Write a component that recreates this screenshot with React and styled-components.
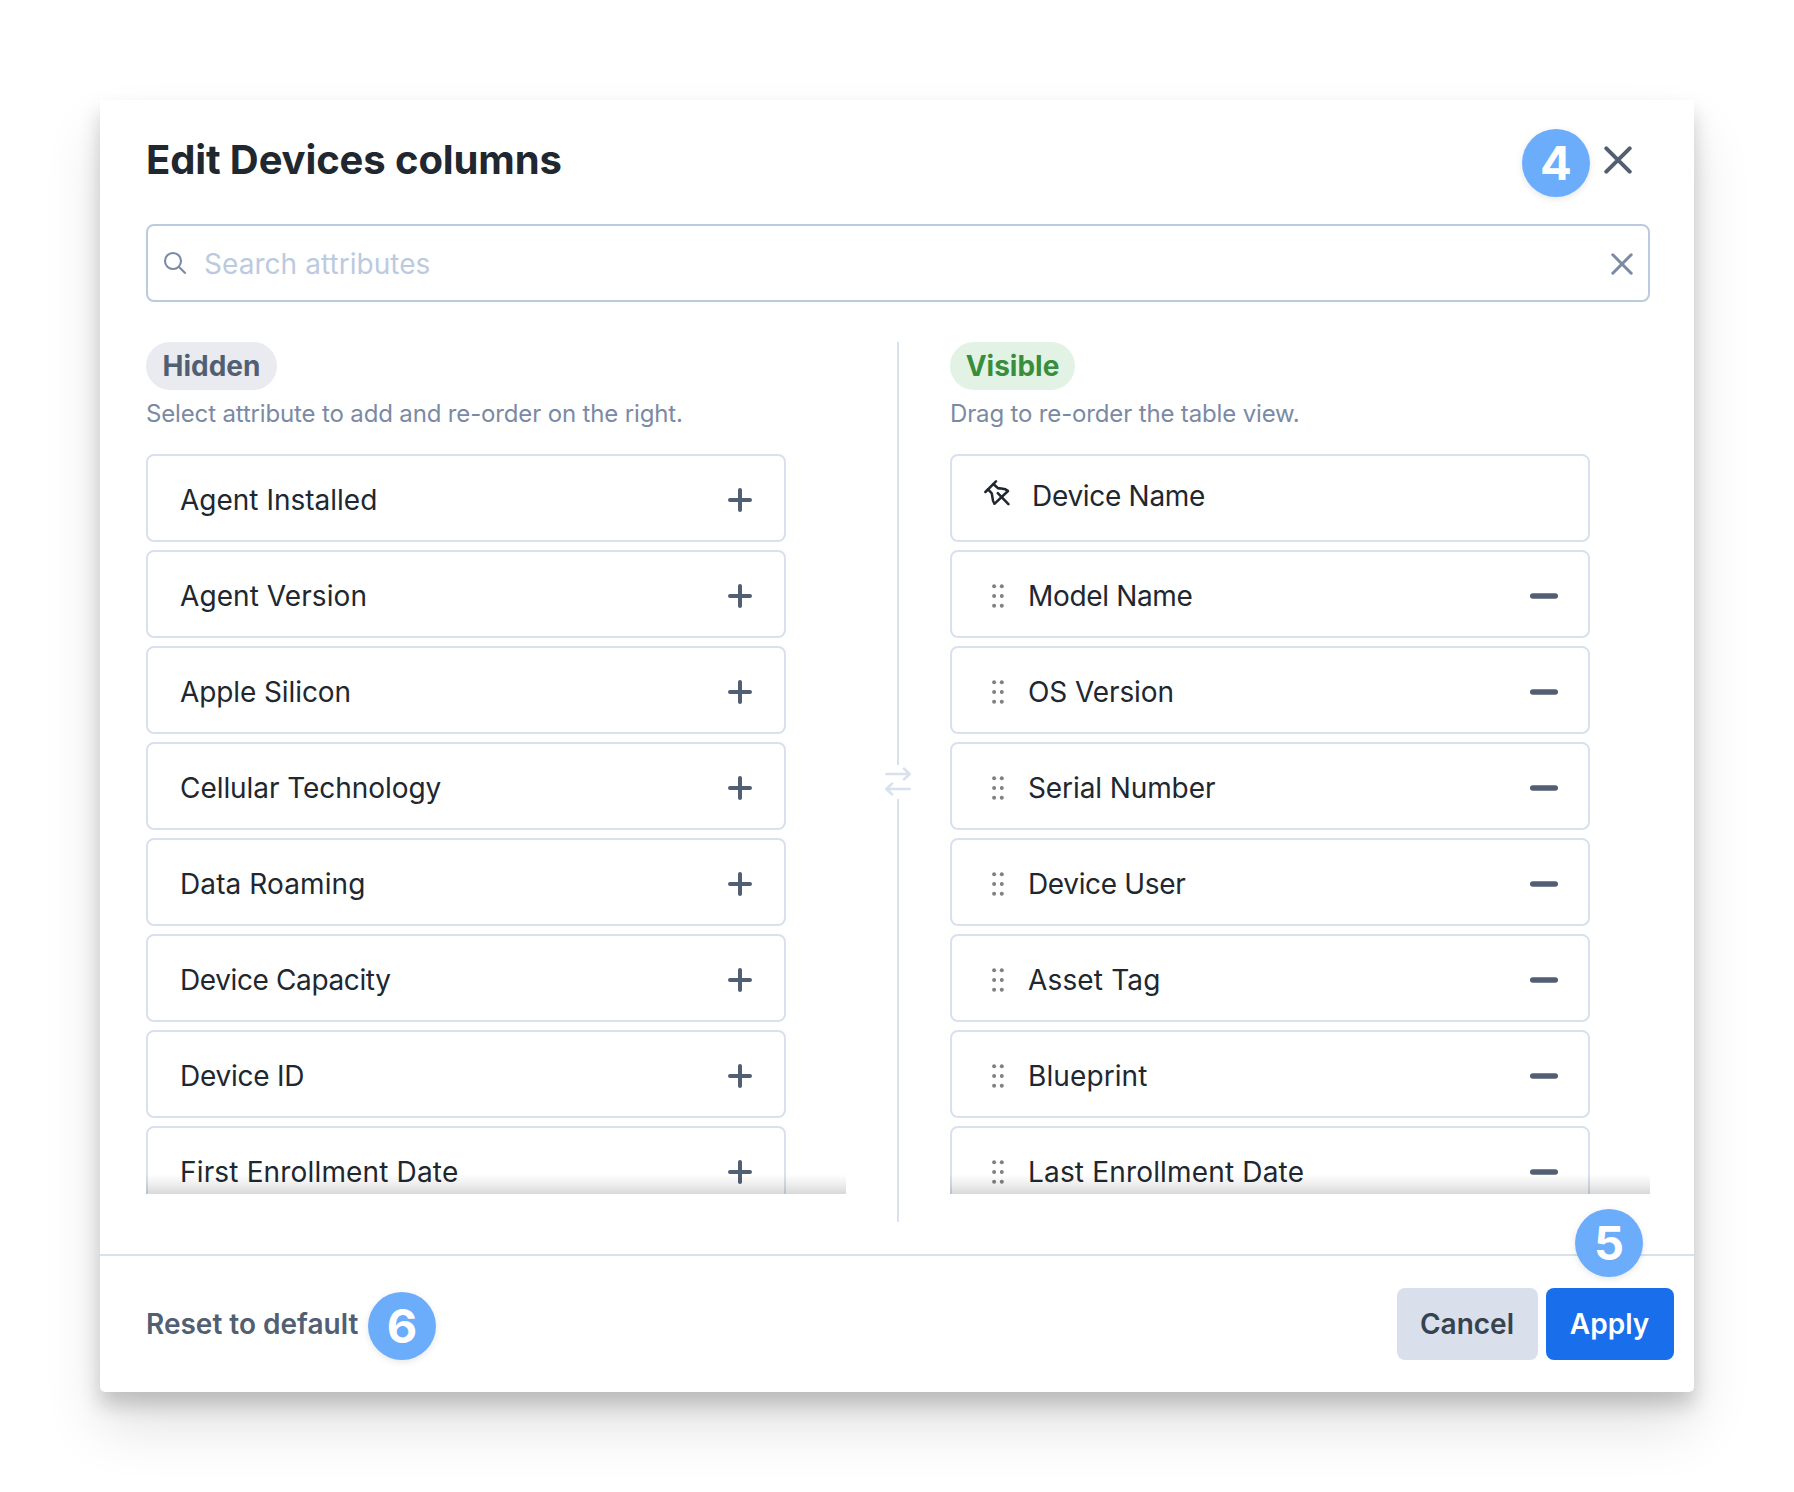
import React, { useState } from 'react';
import styled, { createGlobalStyle } from 'styled-components';

const GlobalStyle = createGlobalStyle`
  * {
    box-sizing: border-box;
  }
  body {
    margin: 0;
    background: #fff;
    font-family: Inter, "Liberation Sans", sans-serif;
    color: #20272f;
  }
`;
const Wrapper = styled.div`
  width: 1794px;
  height: 1492px;
  padding: 100px;
  overflow: hidden;
`;
const Modal = styled.div`
  position: relative;
  display: flex;
  flex-direction: column;
  width: 1594px;
  height: 1292px;
  background: #fff;
  border-radius: 0 0 5px 5px;
  box-shadow: 0 13px 20px rgba(0, 0, 0, 0.18), 0 34px 58px rgba(0, 0, 0, 0.12);
`;
const Header = styled.div`
  display: flex;
  align-items: center;
  justify-content: space-between;
  height: 124px;
  padding: 0 62px 4px 46px;
`;
const Title = styled.h1`
  margin: 0;
  font-size: 40px;
  line-height: 48px;
  font-weight: 650;
  letter-spacing: -0.12px;
`;
const IconButton = styled.button`
  display: flex;
  padding: 0;
  border: 0;
  background: none;
  cursor: pointer;
`;
const SearchBox = styled.div`
  display: flex;
  align-items: center;
  height: 78px;
  flex: none;
  margin: 0 44px 0 46px;
  padding: 2px 15px 0 14px;
  border: 2px solid #bccadf;
  border-radius: 8px;
`;
const SearchInput = styled.input`
  flex: 1;
  min-width: 0;
  margin-left: 14px;
  padding: 0;
  border: 0;
  outline: 0;
  background: none;
  font: 400 28px/36px Inter, "Liberation Sans", sans-serif;
  letter-spacing: 0.05px;
  color: #20272f;
  &::placeholder {
    color: #bccadf;
    opacity: 1;
  }
`;
const Columns = styled.div`
  display: grid;
  grid-template-columns: 700px 104px 700px;
  height: 880px;
  margin: 40px 0 32px 46px;
`;
const Column = styled.div`
  display: flex;
  flex-direction: column;
  align-items: flex-start;
`;
const Pill = styled.div`
  width: ${props => props.$width}px;
  height: 48px;
  border-radius: 24px;
  text-align: center;
  font-size: 28px;
  line-height: 48px;
  font-weight: 650;
  color: ${props => props.$color};
  background: ${props => props.$background};
`;
const Hint = styled.div`
  height: 64px;
  padding-top: 8px;
  font-size: 24px;
  line-height: 32px;
  letter-spacing: -0.15px;
  white-space: nowrap;
  color: #7b8aa4;
`;
const List = styled.div`
  position: relative;
  width: 700px;
  height: 740px;
  overflow: hidden;
  &::after {
    content: "";
    position: absolute;
    left: 0;
    right: 0;
    bottom: 0;
    height: 20px;
    background: linear-gradient(rgba(0, 0, 0, 0), rgba(0, 0, 0, 0.05) 40%, rgba(0, 0, 0, 0.15));
  }
`;
const Item = styled.div`
  display: flex;
  align-items: center;
  width: 640px;
  height: 88px;
  margin-bottom: 8px;
  padding: ${props => (props.$pinned ? '0 30px 4px 32px' : '4px 30px 0 32px')};
  border: 2px solid #d8e1ed;
  border-radius: 8px;
`;
const Label = styled.span`
  flex: 1;
  font-size: 28px;
  line-height: 36px;
  letter-spacing: ${props => props.$track || 0}px;
  white-space: nowrap;
`;
const Grip = styled.span`
  display: flex;
  width: 44px;
  padding-left: 8px;
`;
const PinSlot = styled.span`
  display: flex;
  width: 48px;
  padding: 0 0 6px;
`;
const AddSlot = styled.span`
  display: flex;
  padding-right: 2px;
`;
const Divider = styled.div`
  display: flex;
  flex-direction: column;
  align-items: center;
`;
const Line = styled.div`
  width: 2px;
  height: 423px;
  background: #d8e1ed;
`;
const Footer = styled.div`
  display: flex;
  align-items: center;
  height: 138px;
  padding: 0 20px 0 46px;
  border-top: 2px solid #d8e1ed;
`;
const ResetButton = styled.button`
  margin-right: auto;
  padding: 0;
  border: 0;
  background: none;
  font: 600 28px/36px Inter, "Liberation Sans", sans-serif;
  color: #525f73;
`;
const Button = styled.button`
  width: ${props => props.$width}px;
  height: 72px;
  margin-left: 8px;
  padding: 0 1px 0 0;
  border: 0;
  border-radius: 8px;
  font: 600 28px/36px Inter, "Liberation Sans", sans-serif;
  color: ${props => (props.$primary ? '#fff' : '#37424f')};
  background: ${props => (props.$primary ? '#186eeb' : '#d9e0ec')};
`;
const Badge = styled.div`
  position: absolute;
  left: ${props => props.$left}px;
  top: ${props => props.$top}px;
  width: 68px;
  height: 68px;
  border-radius: 50%;
  text-align: center;
  font-size: 47px;
  line-height: 67px;
  font-weight: 700;
  color: #fff;
  background: #6badfb;
  box-shadow: 0 2px 7px rgba(0, 0, 0, 0.1);
`;

const CrossIcon = ({ size, weight, color }) => {
  const near = weight / 2 + 0.3;
  const far = size - near;
  return (
    <svg width={size} height={size} viewBox={`0 0 ${size} ${size}`} stroke={color} strokeWidth={weight} strokeLinecap="round">
      <path d={`M${near} ${near}L${far} ${far}M${far} ${near}L${near} ${far}`} />
    </svg>
  );
};
const SearchIcon = () => (
  <svg width="28" height="28" viewBox="0 0 28 28" fill="none" stroke="#7b8aa4" strokeWidth="2.1">
    <circle cx="11" cy="11" r="8" />
    <path d="M16.8 16.8L23.6 23.6" />
  </svg>
);
const PlusIcon = () => (
  <svg width="24" height="24" viewBox="0 0 24 24" stroke="#525f73" strokeWidth="4" strokeLinecap="round">
    <path d="M12 2V22M2 12H22" />
  </svg>
);
const MinusIcon = () => (
  <svg width="28" height="6" viewBox="0 0 28 6">
    <rect y="0.2" width="28" height="5.6" rx="2.8" fill="#525f73" />
  </svg>
);
const GripIcon = () => (
  <svg width="12" height="24" viewBox="0 0 12 24" fill="#808080">
    {[2.3, 12, 21.7].map(y => (
      <React.Fragment key={y}>
        <circle cx="2.1" cy={y} r="2" />
        <circle cx="9.8" cy={y} r="2" />
      </React.Fragment>
    ))}
  </svg>
);
const PinIcon = () => (
  <svg width="26" height="26" viewBox="0 0 26 26" fill="none" stroke="#20272f" strokeWidth="2.5" strokeLinecap="round" strokeLinejoin="round">
    <path d="M1.4 12L12 1.4" />
    <path d="M4 9.4L7.6 13.2C9 16.4 7.6 20 10.4 23.8L24 11C20.6 7.6 17 9.2 13.8 8L9.6 4.2" />
    <path d="M13.8 13.2L24.4 24.2" />
  </svg>
);
const SwapIcon = () => (
  <svg width="26" height="34" viewBox="0 0 26 34" fill="none" stroke="#d8e1ed" strokeWidth="2.7" strokeLinecap="round" strokeLinejoin="round">
    <path d="M1.4 9H24.4M19 3.6L24.6 9L19 14.4M24.6 24H1.6M7 18.6L1.4 24L7 29.4" />
  </svg>
);

const HIDDEN = [
  { name: 'Agent Installed' },
  { name: 'Agent Version', track: 0.08 },
  { name: 'Apple Silicon', track: -0.1 },
  { name: 'Cellular Technology', track: -0.06 },
  { name: 'Data Roaming', track: 0.1 },
  { name: 'Device Capacity', track: -0.38 },
  { name: 'Device ID', track: -0.25 },
  { name: 'First Enrollment Date', track: 0.16 },
];
const VISIBLE = [
  { name: 'Model Name', track: -0.34 },
  { name: 'OS Version', track: -0.1 },
  { name: 'Serial Number', track: -0.1 },
  { name: 'Device User', track: -0.35 },
  { name: 'Asset Tag', track: 0.15 },
  { name: 'Blueprint', track: 0.1 },
  { name: 'Last Enrollment Date', track: 0.17 },
];

const App = () => {
  const [query, setQuery] = useState('');
  return (
    <Wrapper>
      <GlobalStyle />
      <Modal>
        <Header>
          <Title>Edit Devices columns</Title>
          <IconButton aria-label="Close">
            <CrossIcon size={28} weight={4} color="#525f73" />
          </IconButton>
        </Header>
        <SearchBox>
          <SearchIcon />
          <SearchInput
            placeholder="Search attributes"
            value={query}
            onChange={e => setQuery(e.target.value)}
          />
          <IconButton aria-label="Clear" onClick={() => setQuery('')}>
            <CrossIcon size={22} weight={3} color="#7b8aa4" />
          </IconButton>
        </SearchBox>
        <Columns>
          <Column>
            <Pill $width={131} $color="#525f73" $background="#e9ebf1">Hidden</Pill>
            <Hint>Select attribute to add and re-order on the right.</Hint>
            <List>
              {HIDDEN.map(({ name, track }) => (
                <Item key={name}>
                  <Label $track={track}>{name}</Label>
                  <AddSlot><PlusIcon /></AddSlot>
                </Item>
              ))}
            </List>
          </Column>
          <Divider>
            <Line />
            <SwapIcon />
            <Line />
          </Divider>
          <Column>
            <Pill $width={125} $color="#388e3c" $background="#e2f3e5">Visible</Pill>
            <Hint>Drag to re-order the table view.</Hint>
            <List>
              <Item $pinned>
                <PinSlot><PinIcon /></PinSlot>
                <Label $track={-0.3}>Device Name</Label>
              </Item>
              {VISIBLE.map(({ name, track }) => (
                <Item key={name}>
                  <Grip><GripIcon /></Grip>
                  <Label $track={track}>{name}</Label>
                  <MinusIcon />
                </Item>
              ))}
            </List>
          </Column>
        </Columns>
        <Footer>
          <ResetButton>Reset to default</ResetButton>
          <Button $width={141}>Cancel</Button>
          <Button $width={128} $primary>Apply</Button>
        </Footer>
        <Badge $left={1422} $top={29}>4</Badge>
        <Badge $left={1475} $top={1109}>5</Badge>
        <Badge $left={268} $top={1192}>6</Badge>
      </Modal>
    </Wrapper>
  );
};

export default App;
